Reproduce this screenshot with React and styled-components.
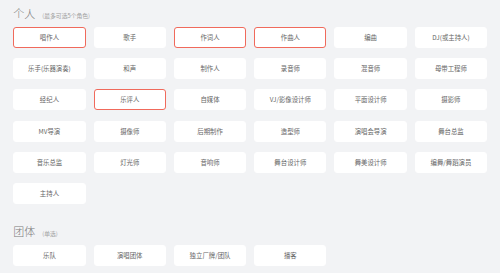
import React from 'react';
import styled, { createGlobalStyle } from 'styled-components';

const GlobalStyle = createGlobalStyle`
   html, body {
      margin: 0;
      padding: 0;
      background: #f2f3f5;
      font-family: "Noto Sans CJK SC", "Noto Sans", sans-serif;
   }
`;

const Page = styled.div`
   display: flex;
   flex-direction: column;
   padding: 6px 13.3px 0;
   width: 500px;
   height: 273px;
   box-sizing: border-box;
   overflow: hidden;
`;

const Header = styled.div`
   display: flex;
   align-items: baseline;
   gap: 7px;
   height: 14px;
   line-height: 14px;
   margin-top: ${(props) => props.$top || 0}px;
   margin-bottom: 6.7px;
`;

const Title = styled.span`
   font-size: 11px;
   font-weight: 300;
   color: #7a7a7a;
`;

const Hint = styled.span`
   font-size: 5.8px;
   color: #a0a0a0;
`;

const Grid = styled.div`
   display: grid;
   grid-template-columns: repeat(6, 72.3px);
   grid-auto-rows: 21px;
   column-gap: 8px;
   row-gap: 10.3px;
`;

const Option = styled.div`
   display: flex;
   align-items: center;
   justify-content: center;
   background: #ffffff;
   border-radius: 3px;
   box-sizing: border-box;
   border: 1px solid ${(props) => (props.$active ? '#f06a5c' : '#ffffff')};
   font-size: 6.4px;
   color: #666666;
   white-space: nowrap;
`;

const personal = [
   '唱作人', '歌手', '作词人', '作曲人', '编曲', 'DJ(或主持人)',
   '乐手(乐器演奏)', '和声', '制作人', '录音师', '混音师', '母带工程师',
   '经纪人', '乐评人', '自媒体', 'VJ/影像设计师', '平面设计师', '摄影师',
   'MV导演', '摄像师', '后期制作', '造型师', '演唱会导演', '舞台总监',
   '音乐总监', '灯光师', '音响师', '舞台设计师', '舞美设计师', '编舞/舞蹈演员',
   '主持人',
];

const selected = ['唱作人', '作词人', '作曲人', '乐评人'];

const groups = ['乐队', '演唱团体', '独立厂牌/团队', '播客'];

export default function App() {
   return (
      <>
         <GlobalStyle />
         <Page>
            <Header>
               <Title>个人</Title>
               <Hint>(最多可选5个角色)</Hint>
            </Header>
            <Grid>
               {personal.map((name) => (
                  <Option key={name} $active={selected.includes(name)}>
                     {name}
                  </Option>
               ))}
            </Grid>
            <Header $top={20.3}>
               <Title>团体</Title>
               <Hint>(单选)</Hint>
            </Header>
            <Grid>
               {groups.map((name) => (
                  <Option key={name}>{name}</Option>
               ))}
            </Grid>
         </Page>
      </>
   );
}
